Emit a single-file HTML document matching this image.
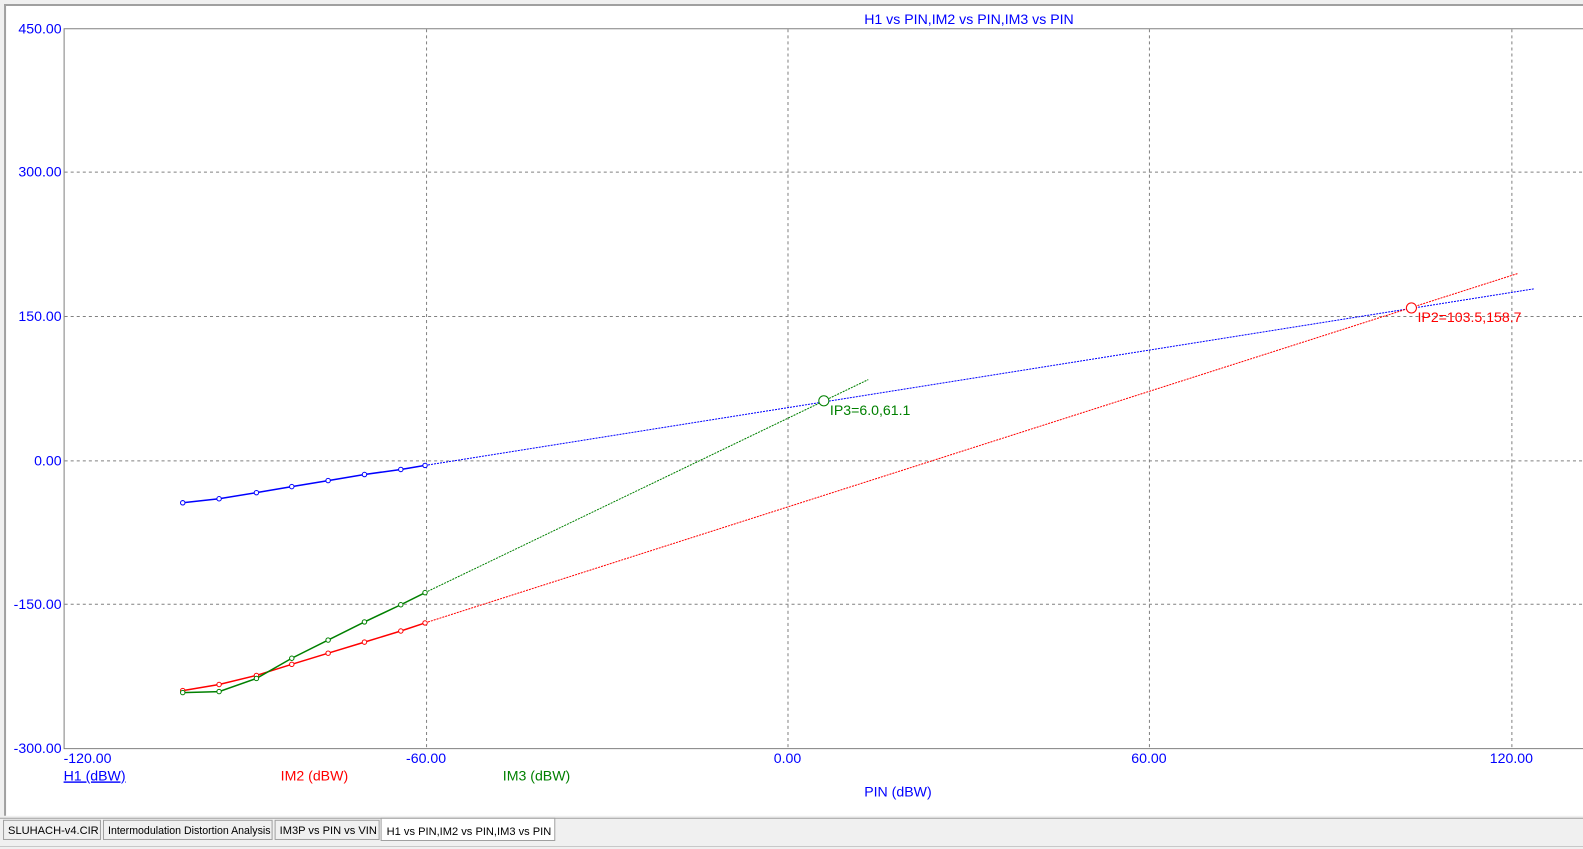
<!DOCTYPE html>
<html><head><style>
body{margin:0;width:1583px;height:849px;overflow:hidden;background:#f0f0f0;font-family:"Liberation Sans",sans-serif}
svg{position:absolute;left:0;top:0}
</style></head><body>
<svg width="1583" height="849" xmlns="http://www.w3.org/2000/svg" font-family="Liberation Sans, sans-serif" font-size="14">
<rect x="0" y="0" width="1583" height="849" fill="#f0f0f0"/>
<g transform="scale(1.0096,1.0096)">
<rect x="4" y="4" width="1579" height="804" fill="#fff"/>
<line x1="4" y1="5" x2="1583" y2="5" stroke="#a0a0a0" stroke-width="2"/>
<line x1="5" y1="4" x2="5" y2="808" stroke="#a0a0a0" stroke-width="2"/>
<g stroke="#808080" stroke-dasharray="3,3" stroke-width="1">
<line x1="64" y1="170.5" x2="1583" y2="170.5"/>
<line x1="64" y1="313.5" x2="1583" y2="313.5"/>
<line x1="64" y1="456.5" x2="1583" y2="456.5"/>
<line x1="64" y1="598.5" x2="1583" y2="598.5"/>
<line x1="422.5" y1="29" x2="422.5" y2="741"/>
<line x1="780.5" y1="29" x2="780.5" y2="741"/>
<line x1="1138.5" y1="29" x2="1138.5" y2="741"/>
<line x1="1497.5" y1="29" x2="1497.5" y2="741"/>
</g>
<path d="M63.5 741 V28.5 H1583 M63 741.5 H1583" stroke="#808080" fill="none"/>
<g fill="#0000ff" font-size="14">
<text x="61" y="33" text-anchor="end">450.00</text>
<text x="61" y="175" text-anchor="end">300.00</text>
<text x="61" y="318" text-anchor="end">150.00</text>
<text x="61" y="461" text-anchor="end">0.00</text>
<text x="61" y="603" text-anchor="end">-150.00</text>
<text x="61" y="746" text-anchor="end">-300.00</text>
<text x="63" y="756">-120.00</text>
<text x="422" y="756" text-anchor="middle">-60.00</text>
<text x="780" y="756" text-anchor="middle">0.00</text>
<text x="1138" y="756" text-anchor="middle">60.00</text>
<text x="1497" y="756" text-anchor="middle">120.00</text>
<text x="856" y="24">H1 vs PIN,IM2 vs PIN,IM3 vs PIN</text>
<text x="856" y="789">PIN (dBW)</text>
<text x="63" y="773" text-decoration="underline">H1 (dBW)</text>
</g>
<text x="278" y="773" fill="#ff0000" font-size="14">IM2 (dBW)</text>
<text x="498" y="773" fill="#008000" font-size="14">IM3 (dBW)</text>
<line x1="421" y1="461" x2="1520" y2="286" stroke="#0000ff" stroke-dasharray="2,1" stroke-width="1"/>
<line x1="421" y1="587" x2="860" y2="376" stroke="#008000" stroke-dasharray="2,1" stroke-width="1"/>
<line x1="421" y1="617" x2="1503" y2="271" stroke="#ff0000" stroke-dasharray="2,1" stroke-width="1"/>
<g fill="none" stroke-width="1.5">
<polyline stroke="#0000ff" points="181,498 217,494 254,488 289,482 325,476 361,470 397,465 421,461"/>
<polyline stroke="#ff0000" points="181,684 217,678 254,669 289,658 325,647 361,636 397,625 421,617"/>
<polyline stroke="#008000" points="181,686 217,685 254,672 289,652 325,634 361,616 397,599 421,587"/>
</g>
<g fill="#fff" stroke-width="1">
<g stroke="#0000ff"><circle cx="181" cy="498" r="2.2"/><circle cx="217" cy="494" r="2.2"/><circle cx="254" cy="488" r="2.2"/><circle cx="289" cy="482" r="2.2"/><circle cx="325" cy="476" r="2.2"/><circle cx="361" cy="470" r="2.2"/><circle cx="397" cy="465" r="2.2"/><circle cx="421" cy="461" r="2.2"/></g>
<g stroke="#ff0000"><circle cx="181" cy="684" r="2.2"/><circle cx="217" cy="678" r="2.2"/><circle cx="254" cy="669" r="2.2"/><circle cx="289" cy="658" r="2.2"/><circle cx="325" cy="647" r="2.2"/><circle cx="361" cy="636" r="2.2"/><circle cx="397" cy="625" r="2.2"/><circle cx="421" cy="617" r="2.2"/></g>
<g stroke="#008000"><circle cx="181" cy="686" r="2.2"/><circle cx="217" cy="685" r="2.2"/><circle cx="254" cy="672" r="2.2"/><circle cx="289" cy="652" r="2.2"/><circle cx="325" cy="634" r="2.2"/><circle cx="361" cy="616" r="2.2"/><circle cx="397" cy="599" r="2.2"/><circle cx="421" cy="587" r="2.2"/></g>
<circle cx="816" cy="397" r="5" stroke="#008000"/>
<circle cx="1398" cy="305" r="5" stroke="#ff0000"/>
</g>
<text x="822" y="411" fill="#008000" font-size="14">IP3=6.0,61.1</text>
<text x="1404" y="319" fill="#ff0000" font-size="14">IP2=103.5,158.7</text>
<g font-size="11" fill="#000">
<line x1="0" y1="810.5" x2="1583" y2="810.5" stroke="#a0a0a0"/>
<rect x="3.5" y="812.5" width="96" height="19" fill="#f0f0f0" stroke="#a0a0a0"/>
<text x="8" y="826">SLUHACH-v4.CIR</text>
<rect x="102.5" y="812.5" width="167" height="19" fill="#f0f0f0" stroke="#a0a0a0"/>
<text x="107" y="826" font-size="10.5">Intermodulation Distortion Analysis</text>
<rect x="272.5" y="812.5" width="103" height="19" fill="#f0f0f0" stroke="#a0a0a0"/>
<text x="277" y="826">IM3P vs PIN vs VIN</text>
<rect x="377.5" y="810.5" width="172" height="22" fill="#fff" stroke="#a0a0a0"/>
<text x="383" y="827">H1 vs PIN,IM2 vs PIN,IM3 vs PIN</text>
<line x1="0" y1="838.5" x2="1583" y2="838.5" stroke="#c8c8c8"/>
</g>
</g>
</svg>
</body></html>
